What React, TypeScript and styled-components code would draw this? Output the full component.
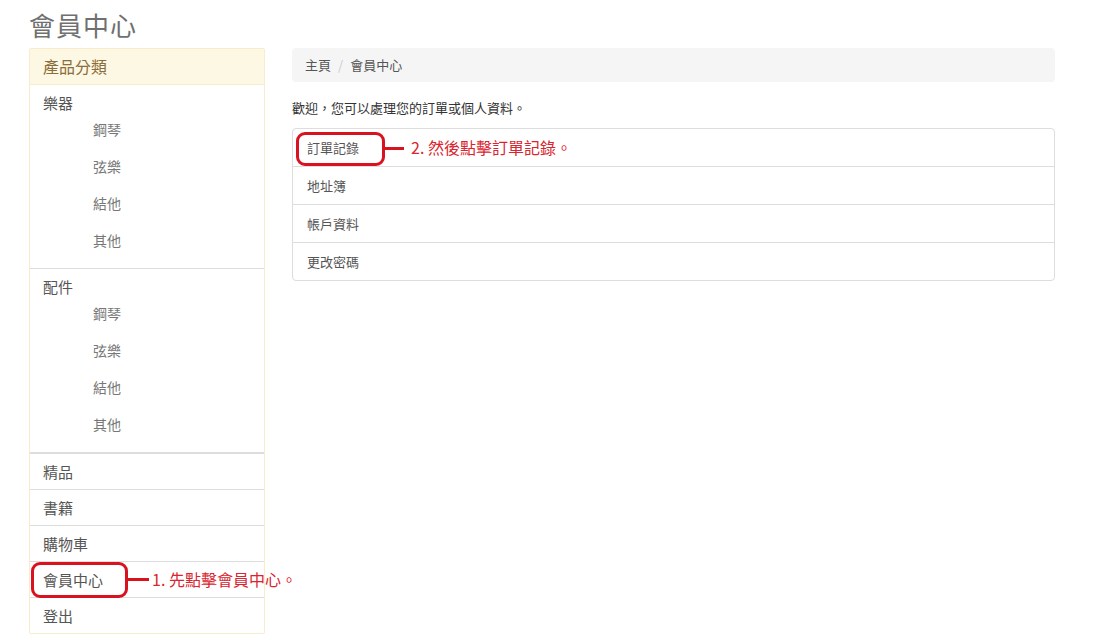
import React from "react";
import styled, { createGlobalStyle } from "styled-components";

const GlobalStyle = createGlobalStyle`
  body {
    margin: 0;
    background: #ffffff;
    font-family: "Noto Sans CJK TC", "Liberation Sans", sans-serif;
    color: #333;
  }
`;

const Page = styled.div`
  width: 1100px;
  height: 644px;
  padding-left: 29px;
  box-sizing: border-box;
  overflow: hidden;
`;

const Title = styled.h1`
  margin: 0;
  height: 48px;
  font-size: 26px;
  line-height: 50px;
  font-weight: 400;
  color: #707070;
  letter-spacing: 1px;
`;

const Columns = styled.div`
  display: flex;
  gap: 27px;
  align-items: flex-start;
`;

const Sidebar = styled.aside`
  width: 236px;
  box-sizing: border-box;
  border: 1px solid #faebcc;
  border-radius: 2px;
`;

const SideHeader = styled.div`
  height: 35px;
  line-height: 35px;
  padding-left: 13px;
  background: #fcf8e3;
  color: #8a6d3b;
  font-size: 16px;
  border-bottom: 1px solid #faebcc;
`;

const Group = styled.div<{ $thick?: boolean }>`
  padding: 9px 0;
  border-bottom: ${(p) => (p.$thick ? "2px" : "1px")} solid #ddd;
`;

const GroupTitle = styled.div`
  height: 17px;
  line-height: 17px;
  padding-left: 13px;
  font-size: 15px;
  color: #555;
`;

const SubItem = styled.div`
  height: 37px;
  line-height: 37px;
  padding-left: 63px;
  font-size: 14px;
  color: #777;
`;

const SideRow = styled.div<{ $last?: boolean }>`
  position: relative;
  height: 35px;
  line-height: 35px;
  padding-left: 13px;
  font-size: 15px;
  color: #555;
  border-bottom: ${(p) => (p.$last ? "none" : "1px solid #ddd")};
`;

const Main = styled.main`
  width: 763px;
`;

const Breadcrumb = styled.div`
  height: 34px;
  line-height: 34px;
  padding: 0 13px;
  background: #f5f5f5;
  border-radius: 4px;
  font-size: 13px;
  color: #555;
`;

const Sep = styled.span`
  color: #ccc;
  padding: 0 7px;
`;

const Welcome = styled.p`
  margin: 0;
  height: 46px;
  line-height: 52px;
  font-size: 13px;
  color: #333;
`;

const ListGroup = styled.div`
  border: 1px solid #ddd;
  border-radius: 4px;
`;

const ListItem = styled.div<{ $last?: boolean }>`
  position: relative;
  height: 37px;
  line-height: 37px;
  padding-left: 14px;
  font-size: 13px;
  color: #555;
  border-bottom: ${(p) => (p.$last ? "none" : "1px solid #ddd")};
`;

const Marker = styled.div<{ $l: number; $t: number; $w: number; $h: number }>`
  position: absolute;
  left: ${(p) => p.$l}px;
  top: ${(p) => p.$t}px;
  width: ${(p) => p.$w}px;
  height: ${(p) => p.$h}px;
  box-sizing: border-box;
  border: 3px solid #d8121f;
  border-radius: 9px;
  pointer-events: none;
`;

const Connector = styled.div<{ $l: number; $t: number; $w: number }>`
  position: absolute;
  left: ${(p) => p.$l}px;
  top: ${(p) => p.$t}px;
  width: ${(p) => p.$w}px;
  height: 3px;
  background: #d8121f;
`;

const Note = styled.span<{ $l: number }>`
  position: absolute;
  left: ${(p) => p.$l}px;
  top: 0;
  white-space: nowrap;
  font-size: 16px;
  color: #d9252f;
  z-index: 2;
`;

const instruments = ["鋼琴", "弦樂", "結他", "其他"];

export default function App() {
  return (
    <>
      <GlobalStyle />
      <Page>
        <Title>會員中心</Title>
        <Columns>
          <Sidebar>
            <SideHeader>產品分類</SideHeader>
            <Group>
              <GroupTitle>樂器</GroupTitle>
              {instruments.map((s) => (
                <SubItem key={s}>{s}</SubItem>
              ))}
            </Group>
            <Group $thick>
              <GroupTitle>配件</GroupTitle>
              {instruments.map((s) => (
                <SubItem key={s}>{s}</SubItem>
              ))}
            </Group>
            <SideRow>精品</SideRow>
            <SideRow>書籍</SideRow>
            <SideRow>購物車</SideRow>
            <SideRow>
              會員中心
              <Marker $l={1} $t={0} $w={97} $h={36} />
              <Connector $l={97} $t={16} $w={22} />
              <Note $l={122}>1. 先點擊會員中心。</Note>
            </SideRow>
            <SideRow $last>登出</SideRow>
          </Sidebar>
          <Main>
            <Breadcrumb>
              主頁<Sep>/</Sep>會員中心
            </Breadcrumb>
            <Welcome>歡迎，您可以處理您的訂單或個人資料。</Welcome>
            <ListGroup>
              <ListItem>
                訂單記錄
                <Marker $l={3} $t={3} $w={89} $h={34} />
                <Connector $l={91} $t={18} $w={20} />
                <Note $l={118}>2. 然後點擊訂單記錄。</Note>
              </ListItem>
              <ListItem>地址簿</ListItem>
              <ListItem>帳戶資料</ListItem>
              <ListItem $last>更改密碼</ListItem>
            </ListGroup>
          </Main>
        </Columns>
      </Page>
    </>
  );
}
